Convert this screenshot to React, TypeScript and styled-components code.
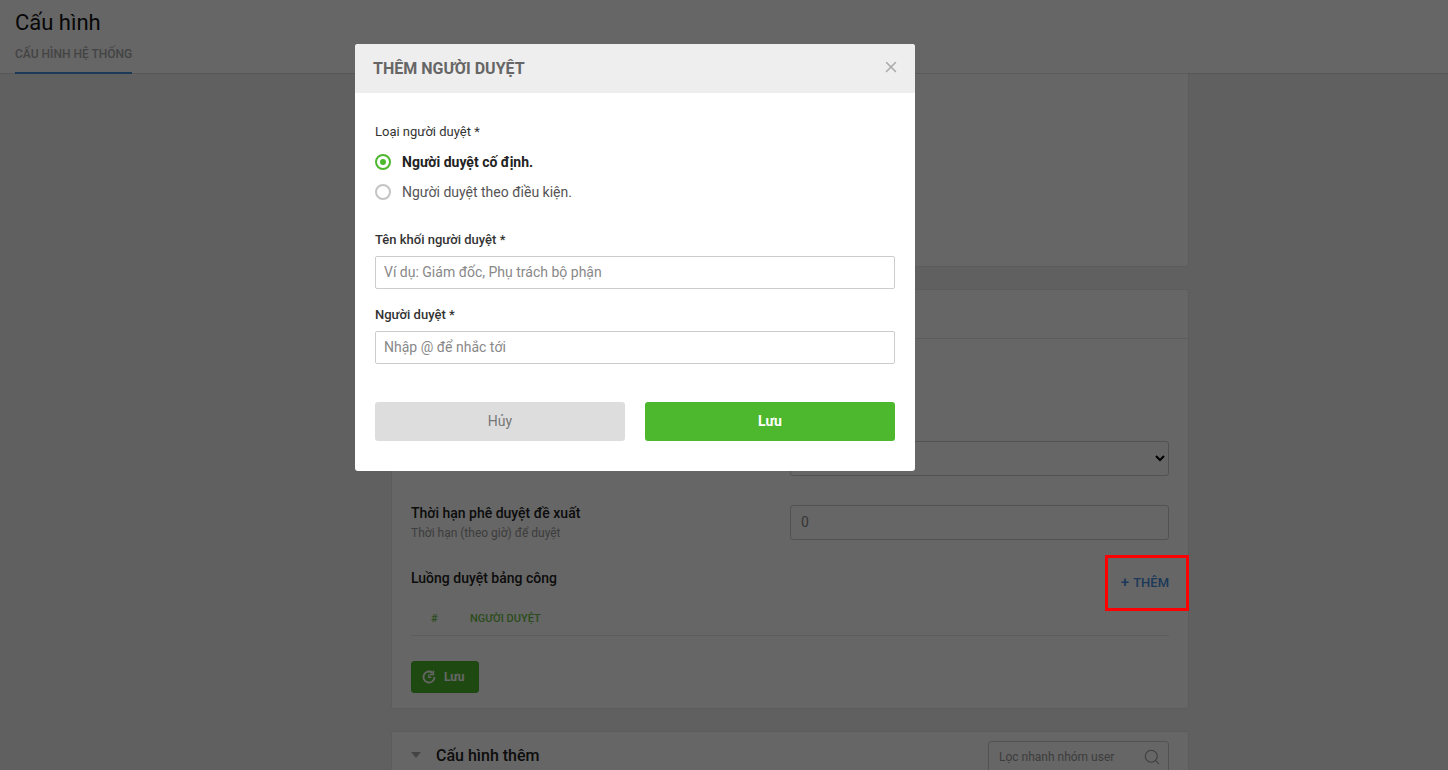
import React from 'react';
import styled, { createGlobalStyle } from 'styled-components';
import { Search, X } from 'lucide-react';

const GlobalStyle = createGlobalStyle`
  html, body {
    margin: 0;
    height: 100%;
    overflow: hidden;
    background: #f1f1f1;
    font-family: Roboto, "Liberation Sans", sans-serif;
  }
  * { box-sizing: border-box; }
`;

const Page = styled.div`
  height: 770px;
  overflow: hidden;
`;

const TopBar = styled.header`
  display: flex;
  flex-direction: column;
  align-items: flex-start;
  height: 74px;
  padding: 10px 15px 0;
  background: #fff;
  border-bottom: 1px solid #d9d9d9;
`;

const PageTitle = styled.h1`
  margin: 0;
  font-size: 22px;
  line-height: 26px;
  font-weight: 400;
  color: #111;
`;

const Tab = styled.div`
  margin-top: auto;
  margin-bottom: -1px;
  height: 35px;
  padding-top: 8px;
  font-size: 12px;
  line-height: 14px;
  font-weight: 500;
  color: #aaa;
  text-transform: uppercase;
  border-bottom: 2px solid #4a8fe0;
`;

const Main = styled.main`
  display: flex;
  flex-direction: column;
  gap: 22px;
  width: 798px;
  margin-left: 391px;
`;

const Card = styled.section`
  background: #fff;
  border: 1px solid #e6e6e6;
  border-radius: 2px;
`;

const EmptyCard = styled(Card)`
  height: 194px;
  margin-top: -1px;
`;

const CardHead = styled.div`
  height: 49px;
  border-bottom: 1px solid #e6e6e6;
`;

const CardBody = styled.div`
  padding: 102px 19px 15px;
`;

const SettingRow = styled.div<{ $gap: number }>`
  display: grid;
  grid-template-columns: 379px 379px;
  margin-bottom: ${({ $gap }) => $gap}px;
`;

const SettingTitle = styled.div`
  font-size: 14px;
  line-height: 16px;
  font-weight: 500;
  color: #222;
`;

const SettingHint = styled.div`
  margin-top: 5px;
  font-size: 12px;
  line-height: 14px;
  color: #999;
`;

const NativeSelect = styled.select`
  width: 379px;
  height: 35px;
  padding: 0 6px;
  background: #fff;
  border: 1px solid #ccc;
  border-radius: 3px;
  font-family: inherit;
  color: #000;
`;

const FieldInput = styled.input`
  width: 379px;
  height: 35px;
  padding: 0 10px 2px;
  border: 1px solid #ccc;
  border-radius: 3px;
  font-family: inherit;
  font-size: 14px;
  color: #888;
`;

const FlowHead = styled.div`
  display: flex;
  justify-content: space-between;
  height: 46px;
  padding-top: 5px;
`;

const AddLink = styled.a`
  display: flex;
  align-items: center;
  gap: 4px;
  height: 16px;
  margin-top: 4px;
  font-size: 13px;
  font-weight: 500;
  color: #4a8fe0;
`;

const PlusSign = styled.span`
  font-size: 15px;
`;

const TableHead = styled.div`
  display: grid;
  grid-template-columns: 59px 1fr;
  height: 25px;
  padding-top: 1px;
  font-size: 11px;
  line-height: 14px;
  font-weight: 500;
  color: #6cc04a;
  border-bottom: 1px solid #e6e6e6;
`;

const HashCell = styled.span`
  padding-left: 20px;
`;

const SaveButton = styled.button`
  display: flex;
  align-items: center;
  gap: 8px;
  width: 68px;
  height: 32px;
  margin-top: 25px;
  padding: 0 10px;
  background: #4db82d;
  border: 1px solid #4aae2c;
  border-radius: 3px;
  font-family: inherit;
  font-size: 12px;
  font-weight: 700;
  color: #fff;
`;

const CollapseHead = styled.div`
  display: flex;
  align-items: flex-start;
  height: 50px;
  padding: 9px 19px 0;
`;

const Caret = styled.span`
  width: 0;
  height: 0;
  margin: 11px 15px 0 0;
  border-left: 5px solid transparent;
  border-right: 5px solid transparent;
  border-top: 6px solid #aaa;
`;

const CollapseTitle = styled.span`
  flex: 1;
  margin-top: 3px;
  font-size: 16px;
  line-height: 24px;
  font-weight: 500;
  color: #222;
`;

const FilterBox = styled.div`
  display: flex;
  align-items: flex-start;
  justify-content: space-between;
  width: 181px;
  height: 36px;
  padding: 6px 7px 0 10px;
  border: 1px solid #ccc;
  border-radius: 3px;
  font-size: 12px;
  line-height: 18px;
  color: #999;
`;

const Backdrop = styled.div`
  position: fixed;
  inset: 0;
  padding: 44px 0 0 355px;
  background: rgba(0, 0, 0, 0.6);
`;

const Modal = styled.div`
  width: 560px;
  height: 427px;
  background: #fff;
  border-radius: 3px;
  overflow: hidden;
`;

const ModalHead = styled.div`
  display: flex;
  align-items: center;
  justify-content: space-between;
  height: 49px;
  padding: 0 15px 0 18px;
  background: #eee;
`;

const ModalTitle = styled.h2`
  margin: 0;
  font-size: 16px;
  font-weight: 700;
  color: #666;
`;

const CloseIcon = styled(X)`
  width: 18px;
  height: 18px;
  margin-top: -3px;
  color: #aaa;
`;

const ModalBody = styled.div`
  padding: 31px 20px 0;
`;

const FieldLabel = styled.div<{ $medium?: boolean }>`
  font-size: 13px;
  line-height: 16px;
  font-weight: ${({ $medium }) => ($medium ? 500 : 400)};
  color: #333;
`;

const RadioRow = styled.label<{ $first?: boolean }>`
  display: flex;
  align-items: center;
  gap: 11px;
  height: 30px;
  margin-top: ${({ $first }) => ($first ? '7px' : '0')};
`;

const RadioDot = styled.span<{ $on?: boolean }>`
  display: grid;
  place-items: center;
  width: 16px;
  height: 16px;
  border-radius: 50%;
  border: 2px solid ${({ $on }) => ($on ? '#4db82d' : '#c4c4c4')};

  &::after {
    content: "";
    width: 6px;
    height: 6px;
    border-radius: 50%;
    background: ${({ $on }) => ($on ? '#4db82d' : 'transparent')};
  }
`;

const RadioText = styled.span<{ $on?: boolean }>`
  font-size: 14px;
  font-weight: ${({ $on }) => ($on ? 700 : 400)};
  color: ${({ $on }) => ($on ? '#222' : '#555')};
`;

const TextField = styled.div<{ $top: number }>`
  margin-top: ${({ $top }) => $top}px;
`;

const ModalInput = styled.input`
  display: block;
  width: 100%;
  height: 33px;
  margin-top: 8px;
  padding: 0 8px 2px;
  border: 1px solid #ccc;
  border-radius: 2px;
  font-family: inherit;
  font-size: 14px;

  &::placeholder {
    color: #888;
    opacity: 1;
  }
`;

const ModalActions = styled.div`
  display: grid;
  grid-template-columns: 250px 250px;
  gap: 20px;
  margin-top: 38px;
`;

const ActionButton = styled.button<{ $primary?: boolean }>`
  height: 39px;
  padding: 0 0 2px;
  border: 0;
  border-radius: 3px;
  font-family: inherit;
  font-size: 14px;
  font-weight: ${({ $primary }) => ($primary ? 700 : 400)};
  background: ${({ $primary }) => ($primary ? '#4db82d' : '#ddd')};
  color: ${({ $primary }) => ($primary ? '#fff' : '#777')};
`;

const Highlight = styled.div`
  position: fixed;
  left: 1105px;
  top: 555px;
  width: 84px;
  height: 56px;
  border: 3px solid #f00;
`;

const RefreshIcon = () => (
  <svg width="14" height="14" viewBox="0 0 14 14" fill="none" stroke="#fff" strokeWidth="1.8">
    <path d="M12.5 7a5.5 5.5 0 1 1-2-4.2" />
    <path d="M11.4 0.8v3.6H7.8" strokeWidth="1.5" />
    <path d="M6.8 4.4v3h2.6" strokeWidth="1.4" />
  </svg>
);

export default function App() {
  return (
    <Page>
      <GlobalStyle />
      <TopBar>
        <PageTitle>Cấu hình</PageTitle>
        <Tab>Cấu hình hệ thống</Tab>
      </TopBar>
      <Main>
        <EmptyCard />
        <Card>
          <CardHead />
          <CardBody>
            <SettingRow $gap={29}>
              <div />
              <NativeSelect><option /></NativeSelect>
            </SettingRow>
            <SettingRow $gap={25}>
              <div>
                <SettingTitle>Thời hạn phê duyệt đề xuất</SettingTitle>
                <SettingHint>Thời hạn (theo giờ) để duyệt</SettingHint>
              </div>
              <FieldInput defaultValue="0" readOnly />
            </SettingRow>
            <FlowHead>
              <SettingTitle>Luồng duyệt bảng công</SettingTitle>
              <AddLink><PlusSign>+</PlusSign>THÊM</AddLink>
            </FlowHead>
            <TableHead>
              <HashCell>#</HashCell>
              <span>NGƯỜI DUYỆT</span>
            </TableHead>
            <SaveButton><RefreshIcon />Lưu</SaveButton>
          </CardBody>
        </Card>
        <Card>
          <CollapseHead>
            <Caret />
            <CollapseTitle>Cấu hình thêm</CollapseTitle>
            <FilterBox>
              Lọc nhanh nhóm user
              <Search size={18} color="#999" strokeWidth={1.4} />
            </FilterBox>
          </CollapseHead>
        </Card>
      </Main>
      <Backdrop>
        <Modal>
          <ModalHead>
            <ModalTitle>THÊM NGƯỜI DUYỆT</ModalTitle>
            <CloseIcon />
          </ModalHead>
          <ModalBody>
            <FieldLabel>Loại người duyệt *</FieldLabel>
            <RadioRow $first>
              <RadioDot $on />
              <RadioText $on>Người duyệt cố định.</RadioText>
            </RadioRow>
            <RadioRow>
              <RadioDot />
              <RadioText>Người duyệt theo điều kiện.</RadioText>
            </RadioRow>
            <TextField $top={25}>
              <FieldLabel $medium>Tên khối người duyệt *</FieldLabel>
              <ModalInput placeholder="Ví dụ: Giám đốc, Phụ trách bộ phận" />
            </TextField>
            <TextField $top={18}>
              <FieldLabel $medium>Người duyệt *</FieldLabel>
              <ModalInput placeholder="Nhập @ để nhắc tới" />
            </TextField>
            <ModalActions>
              <ActionButton>Hủy</ActionButton>
              <ActionButton $primary>Lưu</ActionButton>
            </ModalActions>
          </ModalBody>
        </Modal>
      </Backdrop>
      <Highlight />
    </Page>
  );
}
